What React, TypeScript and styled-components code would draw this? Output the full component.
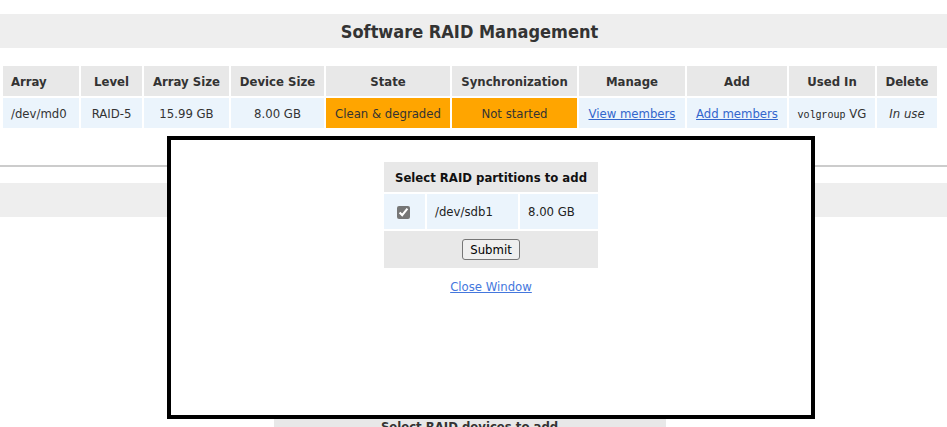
import React from "react";
import styled, { createGlobalStyle } from "styled-components";

const Global = createGlobalStyle`
  html, body { margin: 0; padding: 0; background: #fff; }
  body {
    font-family: "DejaVu Sans", "Noto Sans", sans-serif;
    font-stretch: condensed;
    font-size: 13px;
    color: #333;
    overflow: hidden;
  }
`;

const Page = styled.div`
  position: relative;
  width: 947px;
  height: 427px;
  padding-top: 14px;
  box-sizing: border-box;
  overflow: hidden;
`;

const TitleBar = styled.div`
  height: 34px;
  background: #eeeeee;
  display: flex;
  align-items: center;
  justify-content: center;
  padding-right: 8px;
  font-size: 18px;
  font-weight: bold;
  color: #333;
`;

const Grid = styled.table<{ $mt?: number }>`
  border-collapse: separate;
  border-spacing: 2px;
  table-layout: fixed;
  margin: ${(p) => p.$mt ?? 0}px 0 0 1px;
`;

const Th = styled.th<{ $w: number; $left?: boolean }>`
  width: ${(p) => p.$w}px;
  height: 30px;
  padding: 0;
  background: #e8e8e8;
  font-weight: bold;
  color: #333;
  text-align: ${(p) => (p.$left ? "left" : "center")};
  padding-left: ${(p) => (p.$left ? 8 : 0)}px;
  box-sizing: border-box;
`;

const Td = styled.td<{ $left?: boolean; $tone?: "orange" | "blue" }>`
  height: 30px;
  padding: 0;
  background: ${(p) => (p.$tone === "orange" ? "#ffa500" : "#ebf4fc")};
  text-align: ${(p) => (p.$left ? "left" : "center")};
  padding-left: ${(p) => (p.$left ? 8 : 0)}px;
  color: #333;
  box-sizing: border-box;
  white-space: nowrap;
`;

const Link = styled.a`
  color: #3366cc;
  text-decoration: underline;
  cursor: pointer;
`;

const Mono = styled.span`
  font-family: "Liberation Mono", "DejaVu Sans Mono", monospace;
  font-size: 10px;
  color: #222;
`;

const Em = styled.span`
  font-style: italic;
`;

const Separator = styled.div`
  margin-top: 35px;
  height: 2px;
  background: #cccccc;
`;

const GreyBand = styled.div`
  margin-top: 16px;
  height: 34px;
  background: #eeeeee;
`;

const Under = styled.div`
  margin-top: 201px;
  display: flex;
  justify-content: center;
  padding-right: 8px;
`;

const UnderHead = styled.div`
  width: 392px;
  height: 30px;
  background: #e8e8e8;
  text-align: center;
  font-weight: bold;
  padding-top: 1px;
  box-sizing: border-box;
  color: #333;
`;

const Modal = styled.div`
  position: absolute;
  left: 167px;
  top: 136px;
  width: 648px;
  height: 283px;
  box-sizing: border-box;
  border: 4px solid #000;
  background: #fff;
  display: flex;
  flex-direction: column;
  align-items: center;
  padding-top: 20px;
`;

const PopTable = styled.table`
  border-collapse: separate;
  border-spacing: 2px;
  table-layout: fixed;
`;

const PopTh = styled.th`
  height: 30px;
  padding: 0;
  background: #e8e8e8;
  font-weight: bold;
  color: #111;
  text-align: center;
`;

const PopTd = styled.td<{ $w?: number; $grey?: boolean; $h?: number; $left?: boolean }>`
  width: ${(p) => (p.$w ? `${p.$w}px` : "auto")};
  height: ${(p) => p.$h ?? 35}px;
  padding: 0 0 0 ${(p) => (p.$left ? 8 : 0)}px;
  box-sizing: border-box;
  background: ${(p) => (p.$grey ? "#e8e8e8" : "#ebf4fc")};
  text-align: ${(p) => (p.$left ? "left" : "center")};
  color: #222;
`;

const Check = styled.input`
  margin: 0 2px 0 0;
  width: 13px;
  height: 13px;
  accent-color: #767676;
  vertical-align: middle;
`;

const SubmitBtn = styled.button`
  font-family: "DejaVu Sans", "Noto Sans", sans-serif;
  font-stretch: condensed;
  font-size: 13px;
  color: #000;
  background: #efefef;
  border: 1px solid #767676;
  border-radius: 3px;
  height: 21px;
  padding: 0 7px;
  vertical-align: middle;
`;

const CloseLink = styled.a`
  margin-top: 9px;
  color: #4477dd;
  text-decoration: underline;
  cursor: pointer;
`;

const cols: { label: string; w: number; left?: boolean }[] = [
  { label: "Array", w: 76, left: true },
  { label: "Level", w: 61 },
  { label: "Array Size", w: 85 },
  { label: "Device Size", w: 93 },
  { label: "State", w: 124 },
  { label: "Synchronization", w: 125 },
  { label: "Manage", w: 106 },
  { label: "Add", w: 100 },
  { label: "Used In", w: 86 },
  { label: "Delete", w: 60 },
];

export default function App() {
  return (
    <>
      <Global />
      <Page>
        <TitleBar>Software RAID Management</TitleBar>
        <Grid $mt={16}>
          <thead>
            <tr>
              {cols.map((c) => (
                <Th key={c.label} $w={c.w} $left={c.left}>
                  {c.label}
                </Th>
              ))}
            </tr>
          </thead>
          <tbody>
            <tr>
              <Td $left>/dev/md0</Td>
              <Td>RAID-5</Td>
              <Td>15.99 GB</Td>
              <Td>8.00 GB</Td>
              <Td $tone="orange">Clean &amp; degraded</Td>
              <Td $tone="orange">Not started</Td>
              <Td>
                <Link>View members</Link>
              </Td>
              <Td>
                <Link>Add members</Link>
              </Td>
              <Td>
                <Mono>volgroup</Mono> VG
              </Td>
              <Td>
                <Em>In use</Em>
              </Td>
            </tr>
          </tbody>
        </Grid>
        <Separator />
        <GreyBand />
        <Under>
          <UnderHead>Select RAID devices to add</UnderHead>
        </Under>

        <Modal>
          <PopTable>
            <thead>
              <tr>
                <PopTh colSpan={3}>Select RAID partitions to add</PopTh>
              </tr>
            </thead>
            <tbody>
              <tr>
                <PopTd $w={41}>
                  <Check type="checkbox" defaultChecked />
                </PopTd>
                <PopTd $w={91} $left>/dev/sdb1</PopTd>
                <PopTd $w={78} $left>8.00 GB</PopTd>
              </tr>
              <tr>
                <PopTd colSpan={3} $grey $h={37}>
                  <SubmitBtn>Submit</SubmitBtn>
                </PopTd>
              </tr>
            </tbody>
          </PopTable>
          <CloseLink>Close Window</CloseLink>
        </Modal>
      </Page>
    </>
  );
}
